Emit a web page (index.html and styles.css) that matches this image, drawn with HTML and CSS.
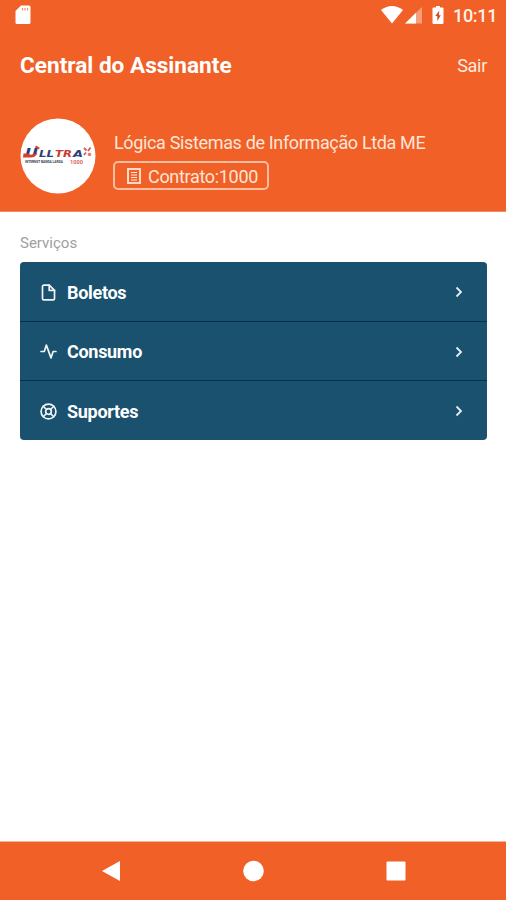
FILE: index.html
```html
<!DOCTYPE html>
<html lang="pt-BR">
<head>
    <meta charset="UTF-8">
    <meta name="viewport" content="width=device-width, initial-scale=1.0">
    <title>Central do Assinante</title>
    <link rel="stylesheet" href="styles.css">
</head>
<body>
    <header class="header">
        <div class="status-bar">
            <svg class="sd-card" width="16" height="20" viewBox="0 0 16 20">
                <path fill="#fff" d="M6 0.500H14Q15.500 0.500 15.500 2V17.500Q15.500 19 14 19H2Q0.500 19 0.500 17.500V6Z"/>
                <path stroke="#f6906a" stroke-width="1.200" d="M7.500 3v2.500M10 3v2.500M12.500 3v2.500"/>
            </svg>
            <div class="status-icons">
                <svg class="wifi" width="22" height="18" viewBox="0 0 22 18">
                    <path fill="#fff" d="M0 4Q11 -4 22 4L11 17.500Z"/>
                </svg>
                <svg class="signal" width="17" height="17" viewBox="0 0 17 17">
                    <path fill="#fff" opacity="0.400" d="M17 0V16.500H0Z"/>
                    <path fill="#fff" d="M11 5.800V16.500H0Z"/>
                </svg>
                <svg class="battery" width="12" height="18" viewBox="0 0 12 18">
                    <path fill="#fff" d="M4 0h4v1.500h2.500Q11.500 1.500 11.500 2.500V17Q11.500 18 10.500 18H1.500Q0.500 18 0.500 17V2.500Q0.500 1.500 1.500 1.500H4Z"/>
                    <path fill="#ce4a28" d="M7.300 4.500L3.300 10H5.300V15L8.800 9.300H6.800Z"/>
                </svg>
                <span class="clock">10:11</span>
            </div>
        </div>
        <div class="title-bar">
            <h1>Central do Assinante</h1>
            <a class="logout" href="#">Sair</a>
        </div>
        <div class="profile">
            <svg class="avatar" width="76" height="76" viewBox="0 0 76 76">
                <circle cx="38" cy="38" r="37.500" fill="#fff"/>
                <g class="logo-name">
                    <text x="5" y="38.500" font-size="13" textLength="13" lengthAdjust="spacingAndGlyphs" fill="#1f3f80">U</text>
                    <text x="19" y="38.500" font-size="9.500" textLength="15" lengthAdjust="spacingAndGlyphs" fill="#2b3f78">LL</text>
                    <text x="35" y="38.500" font-size="9.500" textLength="17" lengthAdjust="spacingAndGlyphs" fill="#c93b35">TR</text>
                    <text x="53" y="38.500" font-size="9.500" textLength="10" lengthAdjust="spacingAndGlyphs" fill="#2b3f78">A</text>
                </g>
                <g class="logo-sub">
                    <text x="5" y="44.500" font-size="3" textLength="38" lengthAdjust="spacingAndGlyphs" fill="#333c50">INTERNET BANDA LARGA</text>
                    <text x="50" y="46" font-size="6" textLength="13" lengthAdjust="spacingAndGlyphs" fill="#d96a64">1000</text>
                </g>
                <path d="M3.500 35.500H8Q9 37 13 36.500L17.500 34.500Q16 39.500 10 39.500H3Z" fill="#d9402c"/>
                <path d="M16 27.500l4 2.500-2 1.500-3-2z" fill="#d8412e"/>
                <path d="M64 30l2.500 2.500M68 33l2.500-3.500M66 34.500l-2 2.500" stroke="#dc574d" stroke-width="1.800"/>
                <circle cx="69.500" cy="36.500" r="1.800" fill="#e27c73"/>
            </svg>
            <div class="profile-info">
                <p class="profile-name">Lógica Sistemas de Informação Ltda ME</p>
                <div class="contract">
                    <svg width="14" height="16" viewBox="0 0 14 16" fill="none" stroke="#ffe9dc">
                        <rect x="1" y="1" width="12" height="14" stroke-width="1.800"/>
                        <path d="M4 4.500h6M4 7h6M4 9.500h6M4 12h6" stroke-width="1.200"/>
                    </svg>
                    <span>Contrato:1000</span>
                </div>
            </div>
        </div>
    </header>

    <main class="content">
        <h2>Serviços</h2>
        <ul class="services">
            <li>
                <a class="service" href="#">
                    <svg class="icon" viewBox="0 0 24 24">
                        <path d="M13 1.500H5.500a2 2 0 0 0-2 2v17a2 2 0 0 0 2 2h13a2 2 0 0 0 2-2V9z"/>
                        <path d="M13 1.500v7.500h7.500"/>
                    </svg>
                    <span>Boletos</span>
                    <svg class="chevron" viewBox="0 0 8 12"><path d="M1.500 1.500L6 6L1.500 10.500"/></svg>
                </a>
            </li>
            <li>
                <a class="service" href="#">
                    <svg class="icon" viewBox="0 0 24 24">
                        <path d="M22.500 12h-4l-3 9L9 3l-3 9H1.500"/>
                    </svg>
                    <span>Consumo</span>
                    <svg class="chevron" viewBox="0 0 8 12"><path d="M1.500 1.500L6 6L1.500 10.500"/></svg>
                </a>
            </li>
            <li>
                <a class="service" href="#">
                    <svg class="icon" viewBox="0 0 24 24">
                        <circle cx="12" cy="12" r="10.500"/>
                        <circle cx="12" cy="12" r="4"/>
                        <path d="M4.600 4.600l4.600 4.600M14.800 14.800l4.600 4.600M14.800 9.200l4.600-4.600M4.600 19.400l4.600-4.600"/>
                    </svg>
                    <span>Suportes</span>
                    <svg class="chevron" viewBox="0 0 8 12"><path d="M1.500 1.500L6 6L1.500 10.500"/></svg>
                </a>
            </li>
        </ul>
    </main>

    <nav class="nav-bar">
        <svg width="20" height="22" viewBox="0 0 20 22"><path d="M19 1V21L1 11Z"/></svg>
        <svg width="22" height="22" viewBox="0 0 22 22"><circle cx="10.500" cy="11" r="10.300"/></svg>
        <svg width="20" height="20" viewBox="0 0 20 20"><rect x="0.500" y="0.500" width="19" height="19" rx="1"/></svg>
    </nav>
</body>
</html>
```

FILE: styles.css
```css
* {
    margin: 0;
    padding: 0;
    box-sizing: border-box;
    font-family: Roboto, sans-serif;
}

body {
    background-color: #fff;
    display: flex;
    flex-direction: column;
    height: 100vh;
}

a {
    color: inherit;
    text-decoration: none;
}

svg {
    display: block;
    flex-shrink: 0;
}

.header {
    background-color: #f06027;
    color: #fff;
    height: 212px;
    border-bottom: 1px solid #ed8a63;
}

.status-bar {
    display: flex;
    justify-content: space-between;
    align-items: center;
    height: 32px;
    padding: 0 10px 0 15px;
}

.sd-card {
    margin-top: -2px;
}

.status-icons {
    display: flex;
    align-items: center;
}

.wifi {
    margin-top: -2px;
}

.signal {
    margin-left: 2px;
    margin-top: -1px;
}

.battery {
    margin-left: 10px;
    margin-top: -2px;
}

.clock {
    font-size: 18px;
    letter-spacing: -0.3px;
    font-weight: 500;
    line-height: 32px;
    width: 43px;
    margin-left: 9px;
    color: #fff1e9;
}

.title-bar {
    display: flex;
    justify-content: space-between;
    align-items: center;
    height: 66px;
    padding: 0 19px 0 20px;
}

h1 {
    font-size: 22.6px;
    font-weight: 700;
}

.logout {
    font-size: 18px;
    letter-spacing: -0.3px;
    color: #ffe9de;
}

.profile {
    display: flex;
    align-items: center;
    padding: 20px 20px 0;
}

.logo-name text {
    font-family: "DejaVu Sans", sans-serif;
    font-weight: 700;
    font-style: italic;
}

.logo-sub text {
    font-weight: 700;
}

.profile-info {
    margin-left: 18px;
    padding-top: 9px;
}

.profile-name {
    font-size: 18px;
    letter-spacing: -0.35px;
    line-height: 22px;
    color: #ffe5d8;
    white-space: nowrap;
}

.contract {
    display: flex;
    align-items: center;
    gap: 7px;
    width: 156px;
    height: 29px;
    margin: 7px 0 0 -1px;
    padding: 2px 0 0 12px;
    border: 2px solid #fbbc9f;
    border-radius: 5px;
    font-size: 18px;
    letter-spacing: -0.32px;
    color: #ffe5d8;
}

.content {
    flex: 1;
    padding: 22px 19px 0 20px;
}

h2 {
    font-size: 15px;
    font-weight: 400;
    line-height: 18px;
    color: #a0a0a0;
}

.services {
    list-style: none;
    margin-top: 10px;
    background-color: #1a516f;
    border-radius: 4px;
    overflow: hidden;
}

.services li + li {
    border-top: 1px solid #06304f;
}

.service {
    display: flex;
    align-items: center;
    height: 58.6px;
    padding: 2px 24px 0 20px;
    font-size: 18px;
    letter-spacing: -0.3px;
    font-weight: 700;
    color: #fff;
}

.icon {
    width: 17px;
    height: 17px;
    margin-right: 10px;
    fill: none;
    stroke: #eef4f8;
    stroke-width: 2.4;
    stroke-linecap: round;
    stroke-linejoin: round;
}

.chevron {
    width: 8px;
    height: 12px;
    margin-left: auto;
    fill: none;
    stroke: #e4eef4;
    stroke-width: 1.8;
}

.nav-bar {
    display: flex;
    justify-content: space-between;
    align-items: center;
    height: 59px;
    padding: 0 100px 0 101px;
    background-color: #f06027;
    border-top: 1px solid #f5b49c;
    fill: #fff;
}
```
